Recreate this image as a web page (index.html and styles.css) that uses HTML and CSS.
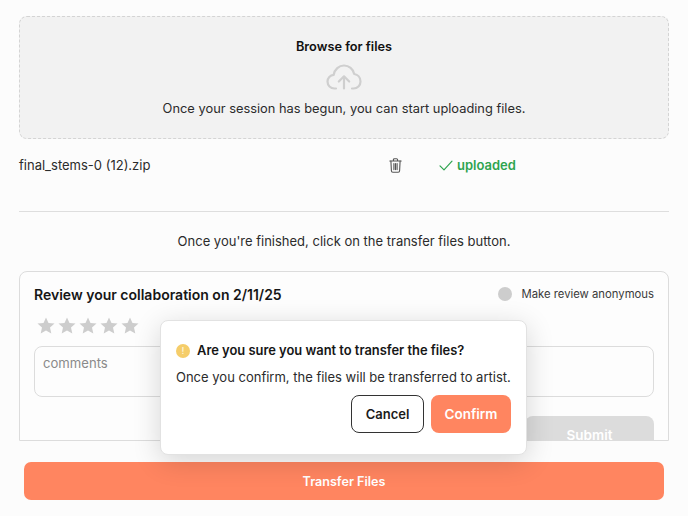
FILE: index.html
```html
<!DOCTYPE html>
<html lang="en">
  <head>
    <meta charset="UTF-8" />
    <meta name="viewport" content="width=device-width, initial-scale=1.0" />
    <title>Transfer files</title>
    <link rel="stylesheet" href="styles.css">
  </head>
  <body>
    <div class="page">
      <div class="dropzone">
        <div class="browse">Browse for files</div>
        <svg class="cloud" width="36" height="26" viewBox="0 0 36 26" fill="none" stroke="#cfcfcf" stroke-width="2.2" stroke-linecap="round" stroke-linejoin="round">
          <path d="M10 24.5H8.5C4.5 24.5 1.5 21.5 1.5 17.6C1.5 14 4.2 11.1 7.7 10.8C8.6 5.4 12.9 1.5 18 1.5C23 1.5 27.2 5.1 28.2 10C31.8 10.6 34.5 13.7 34.5 17.4C34.5 21.4 31.4 24.5 27.5 24.5H26" />
          <path d="M18 24.5V12.5M12.8 17.5L18 12.3L23.2 17.5" />
        </svg>
        <div class="hint">Once your session has begun, you can start uploading files.</div>
      </div>

      <div class="file-row">
        <span class="file-name">final_stems-0 (12).zip</span>
        <svg class="trash" width="13" height="15" viewBox="0 0 13 15" fill="none" stroke="#555" stroke-width="1.1" stroke-linecap="round" stroke-linejoin="round">
          <path d="M0.8 3H12.2M4.4 3V1.8C4.4 1.1 4.9 0.7 5.5 0.7H7.5C8.1 0.7 8.6 1.1 8.6 1.8V3" />
          <path d="M1.9 3L2.4 12.8C2.4 13.7 3.1 14.3 3.9 14.3H9.1C9.9 14.3 10.6 13.7 10.6 12.8L11.1 3" />
          <path d="M4.9 5.6V11.6M6.5 5.6V11.6M8.1 5.6V11.6" />
        </svg>
        <svg class="check" width="14" height="11" viewBox="0 0 14 11" fill="none" stroke="#2ea44f" stroke-width="1.2" stroke-linecap="round" stroke-linejoin="round">
          <path d="M1 5.8L5 9.8L13 1.2" />
        </svg>
        <span class="uploaded">uploaded</span>
      </div>

      <div class="divider"></div>
      <div class="finished">Once you're finished, click on the transfer files button.</div>

      <div class="review">
        <div class="review-head">
          <span class="review-title">Review your collaboration on 2/11/25</span>
          <span class="anon"><span class="anon-dot"></span>Make review anonymous</span>
        </div>
        <div class="stars">
          <svg width="18" height="17" viewBox="0 0 18 17"><polygon class="star" points="9,0.5 11.5,6 17.5,6.6 13,10.6 14.3,16.5 9,13.5 3.7,16.5 5,10.6 0.5,6.6 6.5,6" /></svg>
          <svg width="18" height="17" viewBox="0 0 18 17"><polygon class="star" points="9,0.5 11.5,6 17.5,6.6 13,10.6 14.3,16.5 9,13.5 3.7,16.5 5,10.6 0.5,6.6 6.5,6" /></svg>
          <svg width="18" height="17" viewBox="0 0 18 17"><polygon class="star" points="9,0.5 11.5,6 17.5,6.6 13,10.6 14.3,16.5 9,13.5 3.7,16.5 5,10.6 0.5,6.6 6.5,6" /></svg>
          <svg width="18" height="17" viewBox="0 0 18 17"><polygon class="star" points="9,0.5 11.5,6 17.5,6.6 13,10.6 14.3,16.5 9,13.5 3.7,16.5 5,10.6 0.5,6.6 6.5,6" /></svg>
          <svg width="18" height="17" viewBox="0 0 18 17"><polygon class="star" points="9,0.5 11.5,6 17.5,6.6 13,10.6 14.3,16.5 9,13.5 3.7,16.5 5,10.6 0.5,6.6 6.5,6" /></svg>
        </div>
        <div class="comments">comments</div>
        <div class="submit-row">
          <button class="submit" type="button">Submit</button>
        </div>
      </div>

      <button class="transfer" type="button">Transfer Files</button>
    </div>

    <div class="modal">
      <div class="modal-title">
        <span class="warn">!</span>
        <span>Are you sure you want to transfer the files?</span>
      </div>
      <div class="modal-text">Once you confirm, the files will be transferred to artist.</div>
      <div class="modal-buttons">
        <button class="cancel" type="button">Cancel</button>
        <button class="confirm" type="button">Confirm</button>
      </div>
    </div>
  </body>
</html>
```

FILE: styles.css
```css
html,
body {
  margin: 0;
  height: 516px;
  overflow: hidden;
  background-color: #fcfcfc;
  font-family: Inter, "Noto Sans", Arial, sans-serif;
  color: #2b2b2b;
}

button {
  font-family: inherit;
  border: none;
}

.page {
  width: 650px;
  padding: 16px 19px 0px 19px;
}

.dropzone {
  box-sizing: border-box;
  height: 123px;
  padding-top: 22px;
  background-color: #f2f2f2;
  border: 1px dashed #d4d4d4;
  border-radius: 8px;
  text-align: center;
  display: flex;
  flex-direction: column;
  align-items: center;
}

.browse {
  font-size: 12.75px;
  line-height: 16px;
  font-weight: 600;
  color: #111;
}

.cloud {
  margin-top: 9px;
}

.hint {
  margin-top: 10px;
  font-size: 12.85px;
  line-height: 18px;
}

.file-row {
  display: flex;
  align-items: center;
  height: 20px;
  margin-top: 16px;
  font-size: 13px;
}

.file-name {
  width: 370px;
}

.trash {
  margin-right: 37px;
}

.check {
  margin-right: 4px;
}

.uploaded {
  font-size: 13px;
  font-weight: 600;
  color: #2ea44f;
}

.divider {
  height: 1px;
  margin-top: 36px;
  background-color: #dedede;
}

.finished {
  margin-top: 20px;
  font-size: 13px;
  line-height: 18px;
  text-align: center;
}

.review {
  box-sizing: border-box;
  height: 170px;
  margin-top: 21px;
  padding: 12px 14px 0px 14px;
  overflow: hidden;
  border: 1px solid #dcdcdc;
  border-radius: 8px 8px 0px 0px;
  background-color: #fdfdfd;
}

.review-head {
  display: flex;
  justify-content: space-between;
  align-items: center;
  height: 20px;
}

.review-title {
  font-size: 14px;
  font-weight: 600;
  color: #161616;
}

.anon {
  display: flex;
  align-items: center;
  font-size: 11.3px;
  color: #3a3a3a;
}

.anon-dot {
  width: 14px;
  height: 14px;
  margin-right: 9px;
  border-radius: 50%;
  background-color: #cdcdcd;
}

.stars {
  display: flex;
  gap: 3px;
  height: 17px;
  margin: 13px 0px 0px 3px;
}

.star {
  fill: #cdcdcd;
}

.comments {
  box-sizing: border-box;
  height: 51px;
  margin-top: 12px;
  padding: 7px 8px;
  border: 1px solid #dcdcdc;
  border-radius: 8px;
  font-size: 13.1px;
  line-height: 18px;
  color: #8a8a8a;
}

.submit-row {
  display: flex;
  justify-content: flex-end;
  margin-top: 19px;
}

.submit {
  width: 129px;
  height: 38px;
  border-radius: 8px;
  background-color: #dcdcdc;
  color: #fff;
  font-size: 13.5px;
  font-weight: 600;
}

.transfer {
  display: block;
  width: 640px;
  height: 38px;
  margin: 21px 0px 0px 5px;
  border-radius: 7px;
  background-color: #ff8560;
  color: #fff;
  font-size: 12.6px;
  font-weight: 600;
}

.modal {
  position: absolute;
  left: 160px;
  top: 320px;
  box-sizing: border-box;
  width: 367px;
  height: 135px;
  padding: 22px 15px 0px 15px;
  background-color: #fff;
  border: 1px solid #e2e2e2;
  border-radius: 8px;
  box-shadow: 0px 6px 28px rgba(0, 0, 0, 0.16);
}

.modal-title {
  display: flex;
  align-items: center;
  font-size: 12.9px;
  line-height: 16px;
  font-weight: 600;
  color: #161616;
}

.warn {
  width: 14px;
  height: 14px;
  margin-right: 7px;
  border-radius: 50%;
  background-color: #f5cd6a;
  color: #fdf3d8;
  font-size: 9px;
  line-height: 14px;
  text-align: center;
}

.modal-text {
  margin-top: 9px;
  font-size: 13px;
  line-height: 18px;
  white-space: nowrap;
}

.modal-buttons {
  display: flex;
  justify-content: flex-end;
  gap: 7px;
  margin-top: 9px;
}

.cancel {
  box-sizing: border-box;
  width: 73px;
  height: 38px;
  background-color: #fff;
  border: 1px solid #333;
  border-radius: 8px;
  color: #1b1b1b;
  font-size: 13px;
  font-weight: 600;
}

.confirm {
  width: 80px;
  height: 38px;
  border-radius: 8px;
  background-color: #ff8560;
  color: #fff;
  font-size: 13.5px;
  font-weight: 600;
}
```
